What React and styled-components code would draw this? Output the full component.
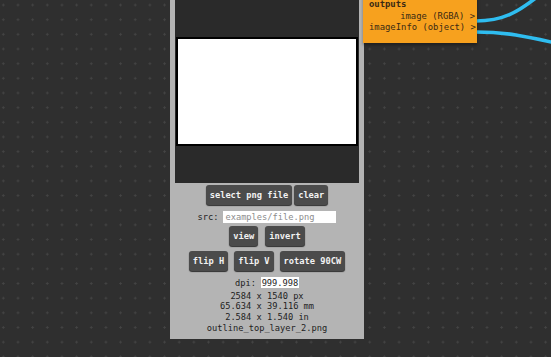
import React from "react";
import styled, { createGlobalStyle } from "styled-components";

const Global = createGlobalStyle`
  html, body { margin: 0; padding: 0; width: 100%; height: 100%; overflow: hidden; background: #2f2f2f; }
  #root { width: 100%; height: 100%; }
`;

const Canvas = styled.div`
  position: relative;
  width: 551px;
  height: 357px;
  overflow: hidden;
  background-color: #2f2f2f;
  background-image: radial-gradient(circle, #444 0.9px, transparent 1.4px);
  background-size: 14.67px 14.67px;
  background-position: -4px -2.3px;
  font-family: "DejaVu Sans Mono", "Liberation Mono", monospace;
`;

const Node = styled.div`
  position: absolute;
  left: 170px;
  top: -5px;
  width: 194px;
  box-sizing: border-box;
  padding: 5px;
  background: #b4b4b4;
  display: flex;
  flex-direction: column;
  align-items: center;
  font-size: 8.7px;
  color: #1e1e1e;
`;

const Preview = styled.div`
  width: 184px;
  height: 183px;
  background: #2a2a2a;
  display: flex;
  align-items: center;
  justify-content: center;
`;

const ImageBox = styled.div`
  width: 182px;
  height: 109px;
  box-sizing: border-box;
  border: 2px solid #000;
  background: #fff;
`;

const Row = styled.div`
  display: flex;
  align-items: center;
  justify-content: center;
  gap: ${(p) => p.$gap ?? 6}px;
  margin-top: ${(p) => p.$mt}px;
  height: ${(p) => p.$h}px;
`;

const Button = styled.div`
  height: 20px;
  box-sizing: border-box;
  padding: 0 4px;
  display: flex;
  align-items: center;
  justify-content: center;
  background: #4b4b4b;
  border-radius: 3px;
  box-shadow: 0 1px 1px #2e2e2e;
  color: #f2f2f2;
  font-weight: bold;
  font-size: 8.7px;
  white-space: nowrap;
`;

const Label = styled.span`
  color: #1e1e1e;
  white-space: nowrap;
`;

const Field = styled.div`
  width: ${(p) => p.$w}px;
  height: ${(p) => p.$h}px;
  background: #fff;
  box-sizing: border-box;
  padding: 0 ${(p) => p.$pad}px;
  display: flex;
  align-items: center;
  justify-content: ${(p) => (p.$center ? "center" : "flex-start")};
  color: ${(p) => (p.$placeholder ? "#8c8c8c" : "#1e1e1e")};
  white-space: nowrap;
  overflow: visible;
`;

const Info = styled.div`
  margin-top: 2.7px;
  line-height: 10.7px;
  text-align: center;
  white-space: nowrap;
`;

const Outputs = styled.div`
  position: absolute;
  left: 363px;
  top: -10px;
  width: 114px;
  height: 53px;
  box-sizing: border-box;
  padding: 10px 2px 0 6px;
  background: #f7a11e;
  box-shadow: 0 2px 3px rgba(0, 0, 0, 0.35);
  color: #3a2a14;
  font-size: 8.9px;
  display: flex;
  flex-direction: column;
`;

const OutTitle = styled.div`
  font-weight: bold;
  line-height: 11.5px;
  margin-top: -1px;
`;

const OutPort = styled.div`
  text-align: right;
  line-height: 11.5px;
  white-space: pre;
`;

const Wires = styled.svg`
  position: absolute;
  left: 0;
  top: 0;
  pointer-events: none;
`;

export default function App() {
  return (
    <>
      <Global />
      <Canvas>
        <Wires width="551" height="357" viewBox="0 0 551 357">
          <path d="M476 21 C 503 21, 518 12, 537 -3" fill="none" stroke="#2fbdf0" strokeWidth="3.6" />
          <path d="M476 32 C 505 32, 525 36, 560 44" fill="none" stroke="#2fbdf0" strokeWidth="3.6" />
        </Wires>
        <Node>
          <Preview>
            <ImageBox />
          </Preview>
          <Row $mt={2} $h={20} $gap={2}>
            <Button>select png file</Button>
            <Button>clear</Button>
          </Row>
          <Row $mt={6} $h={12} $gap={5}>
            <Label>src:</Label>
            <Field $w={113} $h={12} $pad={2} $placeholder>examples/file.png</Field>
          </Row>
          <Row $mt={3} $h={20} $gap={7}>
            <Button>view</Button>
            <Button>invert</Button>
          </Row>
          <Row $mt={5} $h={20} $gap={6}>
            <Button>flip H</Button>
            <Button>flip V</Button>
            <Button>rotate 90CW</Button>
          </Row>
          <Row $mt={6} $h={11} $gap={5}>
            <Label>dpi:</Label>
            <Field $w={38} $h={11} $pad={0} $center>999.998</Field>
          </Row>
          <Info>
            2584 x 1540 px
            <br />
            65.634 x 39.116 mm
            <br />
            2.584 x 1.540 in
            <br />
            outline_top_layer_2.png
          </Info>
        </Node>
        <Outputs>
          <OutTitle>outputs</OutTitle>
          <OutPort>{"image (RGBA) >"}</OutPort>
          <OutPort>{"imageInfo (object) >"}</OutPort>
        </Outputs>
      </Canvas>
    </>
  );
}
